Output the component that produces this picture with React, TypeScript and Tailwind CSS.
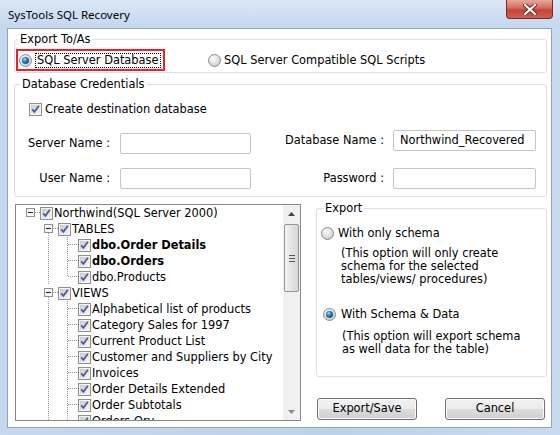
import { useId } from "react";

/** Tree rows shown in the object list. */
type TreeRow = {
  label: string;
  kind: "root" | "group" | "item";
  bold?: boolean;
  last?: boolean;
};

const TREE: TreeRow[] = [
  { label: "Northwind(SQL Server 2000)", kind: "root" },
  { label: "TABLES", kind: "group" },
  { label: "dbo.Order Details", kind: "item", bold: true },
  { label: "dbo.Orders", kind: "item", bold: true },
  { label: "dbo.Products", kind: "item", last: true },
  { label: "VIEWS", kind: "group" },
  { label: "Alphabetical list of products", kind: "item" },
  { label: "Category Sales for 1997", kind: "item" },
  { label: "Current Product List", kind: "item" },
  { label: "Customer and Suppliers by City", kind: "item" },
  { label: "Invoices", kind: "item" },
  { label: "Order Details Extended", kind: "item" },
  { label: "Order Subtotals", kind: "item" },
  { label: "Orders Qry", kind: "item" },
];

function Radio({ checked }: { checked?: boolean }) {
  const id = useId().replace(/:/g, "");
  return (
    <svg width="13" height="13" viewBox="0 0 13 13" className="shrink-0">
      <defs>
        <radialGradient id={`bg${id}`} cx="0.4" cy="0.35" r="0.7">
          <stop offset="0" stopColor="#ffffff" />
          <stop offset="1" stopColor="#c9c9c9" />
        </radialGradient>
        <radialGradient id={`dot${id}`} cx="0.35" cy="0.3" r="0.8">
          <stop offset="0" stopColor="#9fd6ff" />
          <stop offset="0.5" stopColor="#2a7fc8" />
          <stop offset="1" stopColor="#0d3f73" />
        </radialGradient>
      </defs>
      <circle cx="6.5" cy="6.5" r="6" fill={`url(#bg${id})`} stroke="#8c8c8c" />
      {checked && <circle cx="6.5" cy="6.5" r="3.3" fill={`url(#dot${id})`} stroke="#1b4d7e" strokeWidth="0.5" />}
    </svg>
  );
}

function Check() {
  const id = useId().replace(/:/g, "");
  return (
    <svg width="13" height="13" viewBox="0 0 13 13" className="shrink-0">
      <defs>
        <linearGradient id={`cb${id}`} x1="0" y1="0" x2="1" y2="1">
          <stop offset="0" stopColor="#c9c9c9" />
          <stop offset="1" stopColor="#f6f6f6" />
        </linearGradient>
      </defs>
      <rect x="0.5" y="0.5" width="12" height="12" fill="#f3f3f3" stroke="#8e8f8f" />
      <rect x="2" y="2" width="9" height="9" fill={`url(#cb${id})`} />
      <path d="M3.2 6.3 L5.4 8.8 L9.9 2.8" stroke="#4a5c9c" strokeWidth="1.8" fill="none" />
    </svg>
  );
}

/** Dotted tree connectors and expander box for one row. */
function Connector({ row }: { row: TreeRow }) {
  const dot = { stroke: "#9a9a9a", strokeDasharray: "1 1", shapeRendering: "crispEdges" as const };
  const box = (x: number) => (
    <g shapeRendering="crispEdges">
      <rect x={x + 0.5} y="3.5" width="8" height="8" fill="#f7f7f7" stroke="#919191" />
      <line x1={x + 2} y1="7.5" x2={x + 7} y2="7.5" stroke="#222" />
    </g>
  );
  if (row.kind === "root") {
    return (
      <svg width="24" height="16" className="shrink-0">
        {box(10)}
        <line x1="19" y1="7.5" x2="24" y2="7.5" {...dot} />
      </svg>
    );
  }
  if (row.kind === "group") {
    return (
      <svg width="42" height="16" className="shrink-0">
        <line x1="32.5" y1="12" x2="32.5" y2="16" {...dot} />
        {box(28)}
        <line x1="37" y1="7.5" x2="42" y2="7.5" {...dot} />
      </svg>
    );
  }
  return (
    <svg width="62" height="16" className="shrink-0">
      <line x1="32.5" y1="0" x2="32.5" y2="16" {...dot} />
      <line x1="51.5" y1="0" x2="51.5" y2={row.last ? 8 : 16} {...dot} />
      <line x1="52" y1="7.5" x2="62" y2="7.5" {...dot} />
    </svg>
  );
}

function Field({ label, value, labelW, inputW }: { label: string; value?: string; labelW: string; inputW: string }) {
  return (
    <div className="flex items-center">
      <span className={`${labelW} text-right shrink-0 whitespace-nowrap`}>{label}</span>
      <div className={`${inputW} h-[21px] border border-[#c3c5c9] rounded-[2px] bg-white pl-[6px] flex items-center`}>
        {value}
      </div>
    </div>
  );
}

function Button({ children }: { children: string }) {
  return (
    <button className="w-[100px] h-[22px] rounded-[3px] border border-[#707070] bg-[linear-gradient(#f2f2f2_0%,#ebebeb_50%,#dddddd_50%,#cfcfcf_100%)] shadow-[inset_0_0_0_1px_#fcfcfc] text-black leading-none">
      {children}
    </button>
  );
}

export default function App() {
  return (
    <div className="w-[560px] h-[435px] flex flex-col bg-[linear-gradient(90deg,#c5d8ee,#bcd2eb_60%,#c8dbf0)] font-['DejaVu_Sans',Verdana,sans-serif] text-[11.4px] leading-[13px] text-black">
      {/* ---- Title bar ---- */}
      <div className="h-[28px] flex items-start justify-between pl-[8px] pr-[7px] bg-[linear-gradient(#dbe8f6,#c3d7ee)]">
        <span className="mt-[7px] font-['Segoe_UI','Noto_Sans',sans-serif] text-[11.5px] leading-[15px] text-black">
          SysTools SQL Recovery
        </span>
        <div className="w-[47px] h-[19px] rounded-b-[4px] border border-t-0 border-[#6f2a25] bg-[linear-gradient(#e8a79c,#d46a5c_45%,#c24536_55%,#d35e4f)] flex items-center justify-center">
          <svg width="14" height="11" viewBox="0 0 14 11">
            <path d="M2 1 L12 10 M12 1 L2 10" stroke="#5a2a26" strokeWidth="4" strokeLinecap="square" />
            <path d="M2 1 L12 10 M12 1 L2 10" stroke="#ffffff" strokeWidth="2.2" strokeLinecap="square" />
          </svg>
        </div>
      </div>

      {/* ---- Client area ---- */}
      <div className="flex-1 ml-[7px] mr-[8px] mb-[7px] border border-[#8fa4be] bg-white pl-[6px] pr-[4px] pt-[4px] flex flex-col">
        {/* Export To/As */}
        <fieldset className="border border-[#d5dfe5] rounded-[3px] pb-px">
          <legend className="ml-[3px] px-[2px] leading-[13px]">Export To/As</legend>
          <div className="flex items-center mt-[3px]">
            <div className="ml-px w-[149px] h-[22px] border-2 border-[#e8232a] flex items-center pl-px">
              <Radio checked />
              <span className="ml-[3px] h-[15px] px-px border border-dotted border-black flex items-center whitespace-nowrap">
                SQL Server Database
              </span>
            </div>
            <div className="ml-[43px] flex items-center">
              <Radio />
              <span className="ml-[3px]">SQL Server Compatible SQL Scripts</span>
            </div>
          </div>
        </fieldset>

        {/* Database Credentials */}
        <fieldset className="mt-[5px] border border-[#d5dfe5] rounded-[3px] pb-[7px]">
          <legend className="ml-[5px] px-[2px] leading-[13px]">Database Credentials</legend>
          <div className="flex items-center mt-[12px] ml-[14px]">
            <Check />
            <span className="ml-[3px]">Create destination database</span>
          </div>
          <div className="flex items-start">
            <div className="ml-[12px] mt-[17px] flex flex-col gap-[14px]">
              <Field label="Server Name :" labelW="w-[93px] pr-[10px]" inputW="w-[131px]" />
              <Field label="User Name :" labelW="w-[93px] pr-[10px]" inputW="w-[131px]" />
            </div>
            <div className="ml-[29px] mt-[14px] flex flex-col gap-[17px]">
              <Field label="Database Name :" value="Northwind_Recovered" labelW="w-[113px] pr-[9px]" inputW="w-[143px]" />
              <Field label="Password :" labelW="w-[113px] pr-[9px]" inputW="w-[143px]" />
            </div>
          </div>
        </fieldset>

        {/* Tree + export options */}
        <div className="flex items-start mt-[5px]">
          <div className="ml-px mt-[2px] w-[286px] h-[217px] border border-[#828790] flex bg-white">
            <div className="flex-1 overflow-hidden">
              {TREE.map((row) => (
                <div key={row.label} className="h-[16px] flex items-center whitespace-nowrap">
                  <Connector row={row} />
                  <Check />
                  <span className={`ml-px ${row.bold ? "font-bold" : ""}`}>{row.label}</span>
                </div>
              ))}
            </div>
            <div className="w-[17px] bg-[#f0f0f0] flex flex-col items-center">
              <div className="h-[17px] flex items-center justify-center">
                <svg width="7" height="4" viewBox="0 0 7 4"><path d="M0 4 L3.5 0 L7 4 Z" fill="#444" /></svg>
              </div>
              <div className="mt-[2px] w-[15px] h-[68px] rounded-[2px] border border-[#959595] bg-[linear-gradient(90deg,#f3f3f3,#e4e4e4_50%,#d6d6d6)] flex flex-col items-center justify-center gap-[2px]">
                <div className="w-[6px] h-px bg-[#555]" />
                <div className="w-[6px] h-px bg-[#555]" />
                <div className="w-[6px] h-px bg-[#555]" />
              </div>
              <div className="flex-1" />
              <div className="h-[17px] flex items-center justify-center">
                <svg width="7" height="4" viewBox="0 0 7 4"><path d="M0 0 L3.5 4 L7 0 Z" fill="#8a8a8a" /></svg>
              </div>
            </div>
          </div>

          <div className="ml-[15px] w-[231px] flex flex-col">
            <fieldset className="h-[175px] border border-[#d5dfe5] rounded-[3px]">
              <legend className="ml-[6px] px-[2px] leading-[13px]">Export</legend>
              <div className="flex items-center mt-[12px] ml-[4px]">
                <Radio />
                <span className="ml-[4px]">With only schema</span>
              </div>
              <p className="mt-[7px] ml-[24px] leading-[13px] whitespace-nowrap">
                (This option will only create
                <br />
                schema for the selected
                <br />
                tables/views/ procedures)
              </p>
              <div className="flex items-center mt-[22px] ml-[6px]">
                <Radio checked />
                <span className="ml-[5px]">With Schema &amp; Data</span>
              </div>
              <p className="mt-[9px] ml-[25px] leading-[13px] whitespace-nowrap">
                (This option will export schema
                <br />
                as well data for the table)
              </p>
            </fieldset>
            <div className="mt-[21px] ml-px flex gap-[28px]">
              <Button>Export/Save</Button>
              <Button>Cancel</Button>
            </div>
          </div>
        </div>
      </div>
    </div>
  );
}
